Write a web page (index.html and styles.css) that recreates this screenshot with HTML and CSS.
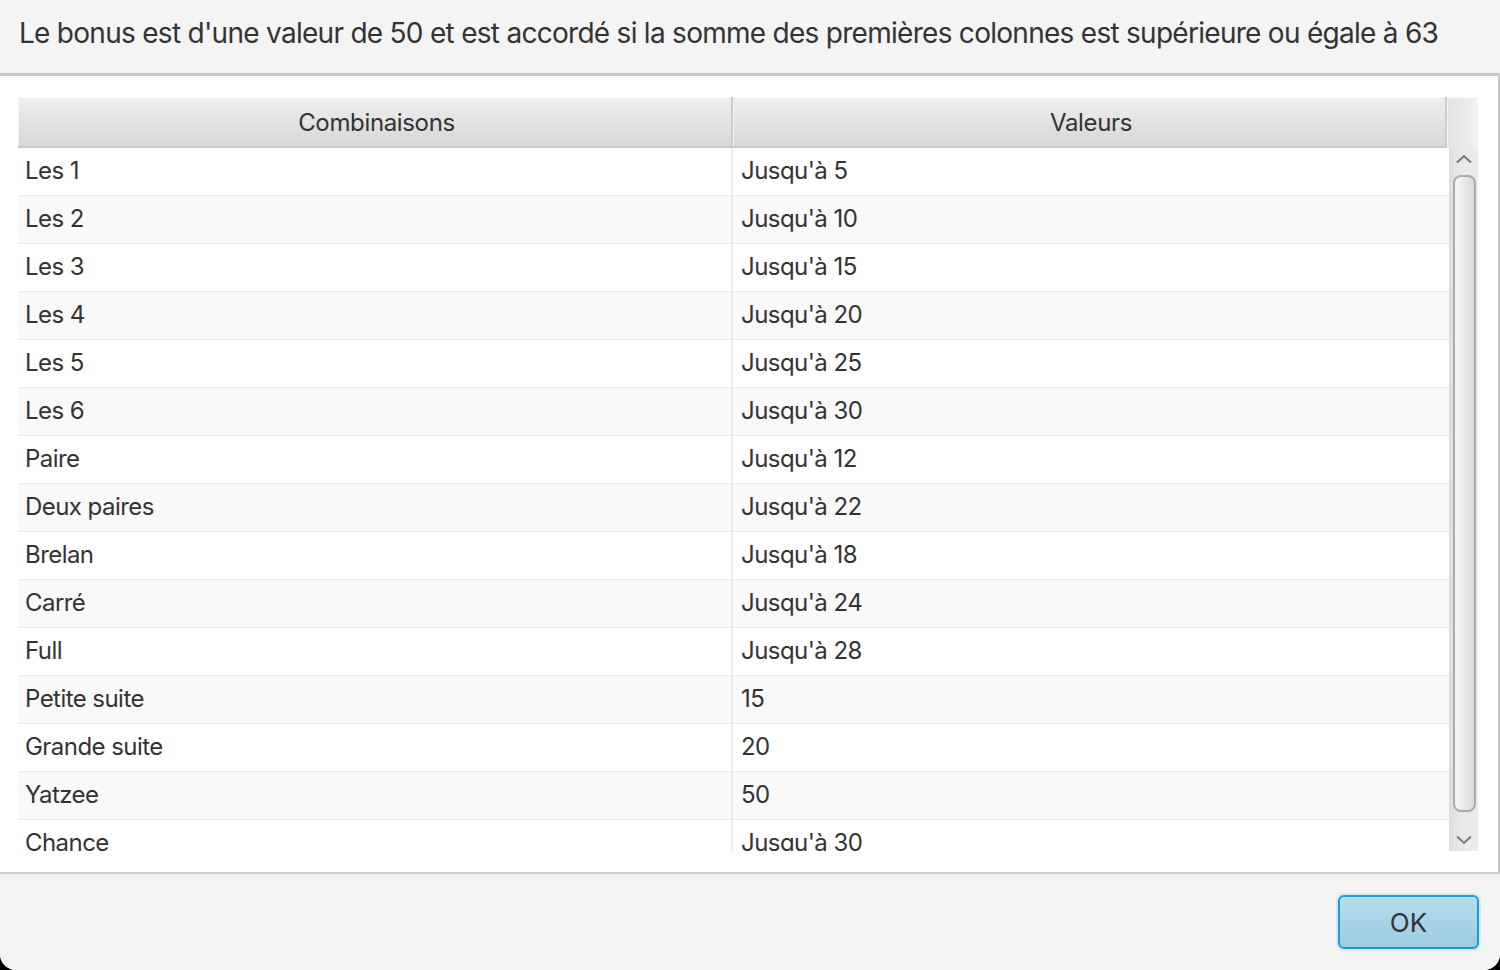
FILE: index.html
```html
<!DOCTYPE html>
<html lang="fr">
<head>
<meta charset="utf-8">
<title>Bonus</title>
<link rel="stylesheet" href="styles.css">
</head>
<body>
<div class="dialog">
  <div class="head">Le bonus est d'une valeur de 50 et est accordé si la somme des premières colonnes est supérieure ou égale à 63</div>
  <div class="content">
    <div class="table">
      <div class="thead">
        <div class="th">Combinaisons</div>
        <div class="th">Valeurs</div>
        <div class="th filler"></div>
      </div>
      <div class="tbody">
        <div class="rows">
          <div class="row"><div class="cell c1">Les 1</div><div class="cell c2">Jusqu'à 5</div></div>
          <div class="row"><div class="cell c1">Les 2</div><div class="cell c2">Jusqu'à 10</div></div>
          <div class="row"><div class="cell c1">Les 3</div><div class="cell c2">Jusqu'à 15</div></div>
          <div class="row"><div class="cell c1">Les 4</div><div class="cell c2">Jusqu'à 20</div></div>
          <div class="row"><div class="cell c1">Les 5</div><div class="cell c2">Jusqu'à 25</div></div>
          <div class="row"><div class="cell c1">Les 6</div><div class="cell c2">Jusqu'à 30</div></div>
          <div class="row"><div class="cell c1">Paire</div><div class="cell c2">Jusqu'à 12</div></div>
          <div class="row"><div class="cell c1">Deux paires</div><div class="cell c2">Jusqu'à 22</div></div>
          <div class="row"><div class="cell c1">Brelan</div><div class="cell c2">Jusqu'à 18</div></div>
          <div class="row"><div class="cell c1">Carré</div><div class="cell c2">Jusqu'à 24</div></div>
          <div class="row"><div class="cell c1">Full</div><div class="cell c2">Jusqu'à 28</div></div>
          <div class="row"><div class="cell c1">Petite suite</div><div class="cell c2">15</div></div>
          <div class="row"><div class="cell c1">Grande suite</div><div class="cell c2">20</div></div>
          <div class="row"><div class="cell c1">Yatzee</div><div class="cell c2">50</div></div>
          <div class="row"><div class="cell c1">Chance</div><div class="cell c2">Jusqu'à 30</div></div>
        </div>
        <div class="vscroll">
          <svg class="arrow up" width="18" height="10" viewBox="0 0 18 10"><path d="M2 8.5 L9 2 L16 8.5" fill="none" stroke="#7a7a7a" stroke-width="2"/></svg>
          <div class="track"><div class="thumb"></div></div>
          <svg class="arrow down" width="18" height="10" viewBox="0 0 18 10"><path d="M2 1.5 L9 8 L16 1.5" fill="none" stroke="#7a7a7a" stroke-width="2"/></svg>
        </div>
      </div>
    </div>
  </div>
  <div class="foot">
    <button class="ok">OK</button>
  </div>
</div>
</body>
</html>
```
FILE: styles.css
```css
html {
  background: #000;
}
body {
  margin: 0;
  width: 1500px;
  height: 970px;
  overflow: hidden;
  font-family: "Inter", "Noto Sans", sans-serif;
  color: #333;
}
.dialog {
  width: 1500px;
  height: 970px;
  display: flex;
  flex-direction: column;
  background: #f3f3f3;
  border-radius: 0 0 16px 16px;
  overflow: hidden;
}
.head {
  flex: none;
  height: 76px;
  box-sizing: border-box;
  padding: 14px 0 0 19px;
  font-size: 28px;
  line-height: 38px;
  letter-spacing: -0.72px;
  background: #f4f4f4;
  border-bottom: 3px solid #c9c9c9;
  white-space: nowrap;
}
.content {
  flex: none;
  height: 798px;
  box-sizing: border-box;
  background: #fff;
  border-right: 2px solid #c9c9c9;
  border-bottom: 2px solid #cbcbcb;
  padding: 21px 19px 21px 18px;
}
.table {
  display: flex;
  flex-direction: column;
  height: 754px;
}
.thead {
  display: grid;
  grid-template-columns: 715px 714px 31px;
  height: 51px;
  flex: none;
}
.th {
  box-sizing: border-box;
  background: linear-gradient(#efefef, #d7d7d7);
  border-bottom: 2px solid #c8c8c8;
  border-right: 2px solid #cacaca;
  box-shadow: inset 1px 1px 0 #f6f6f6;
  font-size: 24px;
  letter-spacing: -0.35px;
  display: flex;
  align-items: center;
  justify-content: center;
  padding: 1px 0 0 4px;
}
.th.filler {
  border-right: 0;
  border-bottom: 0;
  background: linear-gradient(90deg, #e4e4e4, #ececec 70%, #f3f3f3);
}
.tbody {
  display: flex;
  height: 703px;
  overflow: hidden;
}
.rows {
  width: 1431px;
  overflow: hidden;
}
.row {
  display: grid;
  grid-template-columns: 715px 716px;
  height: 48px;
  box-sizing: border-box;
  border-bottom: 1px solid #ebebeb;
  background: #fff;
}
.row:nth-child(even) {
  background: #f9f9f9;
}
.cell {
  font-size: 24px;
  line-height: 46px;
  letter-spacing: -0.55px;
  white-space: nowrap;
  box-sizing: border-box;
}
.c1 {
  padding-left: 7px;
  border-right: 2px solid #ececec;
}
.c2 {
  padding-left: 8px;
}
.vscroll {
  width: 29px;
  display: flex;
  flex-direction: column;
  align-items: center;
  background: linear-gradient(90deg, #dedede, #e9e9e9 40%, #ececec);
}
.arrow {
  flex: none;
}
.arrow.up {
  margin: 6px 0 8px;
}
.arrow.down {
  margin: 5px 0 6px;
}
.track {
  flex: 1;
  align-self: stretch;
  padding: 3px 2px 1px 4px;
  display: flex;
}
.thumb {
  flex: 1;
  margin-bottom: 17px;
  border: 2px solid #ababab;
  border-radius: 8px;
  background: linear-gradient(90deg, #f7f7f7, #e6e6e6 60%, #d9d9d9);
}
.foot {
  flex: 1;
  display: flex;
  justify-content: flex-end;
  align-items: flex-start;
  padding: 21px 21px 0 0;
  background: #f3f3f3;
}
.ok {
  width: 141px;
  height: 54px;
  box-sizing: border-box;
  border: 2px solid #1a9ad6;
  border-radius: 6px;
  background: linear-gradient(#b4dcee, #9ecbe1);
  box-shadow: 0 0 0 2px #d3e9f4, inset 0 1px 0 #c4e4f2;
  font-family: "Inter", "Noto Sans", sans-serif;
  font-size: 26px;
  color: #333;
  padding: 0;
}
```
